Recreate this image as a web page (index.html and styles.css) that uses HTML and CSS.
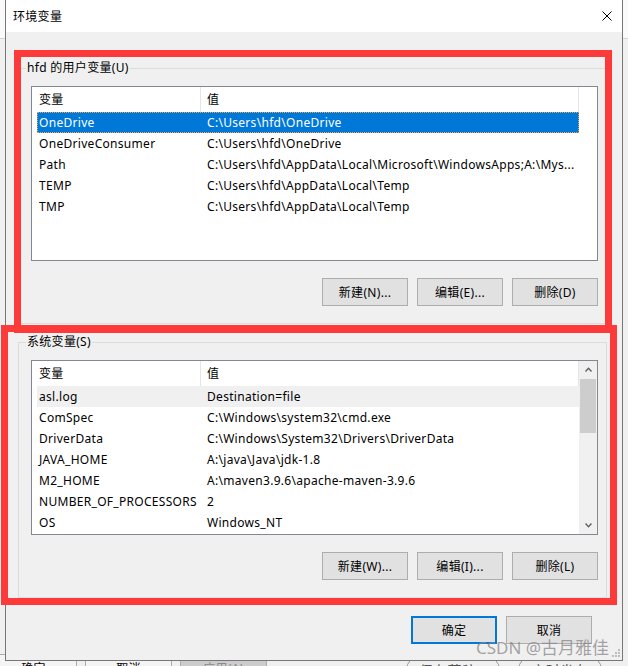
FILE: index.html
```html
<!DOCTYPE html>
<html lang="zh-CN">
<head>
  <meta charset="UTF-8" />
  <title>环境变量</title>
  <link rel="stylesheet" href="styles.css">
</head>
<body>
  <div class="desktop">

    <div class="behind-top"></div>
    <div class="behind-buttons">
      <span class="old-btn">确定</span>
      <span class="old-btn">取消</span>
      <span class="old-btn old-btn-off">应用(A)</span>
    </div>
    <div class="behind-pills">
      <span class="pill">保存草稿 ▾</span>
      <span class="pill">定时发布</span>
    </div>

    <div class="dialog">
      <div class="titlebar">
        <span class="title">环境变量</span>
        <svg class="close" width="10" height="10" viewBox="0 0 10 10">
          <path d="M0.5 0.5 L9.5 9.5 M9.5 0.5 L0.5 9.5" stroke="#000" stroke-width="1" fill="none" />
        </svg>
      </div>

      <fieldset class="group">
        <legend>hfd 的用户变量(U)</legend>
        <div class="list">
          <div class="list-main">
            <div class="list-head">
              <span class="c-name">变量</span>
              <span class="c-value">值</span>
            </div>
            <div class="rows">
              <div class="row selected"><span class="c-name">OneDrive</span><span class="c-value">C:\Users\hfd\OneDrive</span></div>
              <div class="row"><span class="c-name">OneDriveConsumer</span><span class="c-value">C:\Users\hfd\OneDrive</span></div>
              <div class="row"><span class="c-name">Path</span><span class="c-value">C:\Users\hfd\AppData\Local\Microsoft\WindowsApps;A:\Mys...</span></div>
              <div class="row"><span class="c-name">TEMP</span><span class="c-value">C:\Users\hfd\AppData\Local\Temp</span></div>
              <div class="row"><span class="c-name">TMP</span><span class="c-value">C:\Users\hfd\AppData\Local\Temp</span></div>
            </div>
          </div>
        </div>
        <div class="actions">
          <button class="btn">新建(N)...</button>
          <button class="btn">编辑(E)...</button>
          <button class="btn">删除(D)</button>
        </div>
      </fieldset>

      <fieldset class="group">
        <legend>系统变量(S)</legend>
        <div class="list">
          <div class="list-main">
            <div class="list-head">
              <span class="c-name">变量</span>
              <span class="c-value">值</span>
            </div>
            <div class="rows">
              <div class="row current"><span class="c-name">asl.log</span><span class="c-value">Destination=file</span></div>
              <div class="row"><span class="c-name">ComSpec</span><span class="c-value">C:\Windows\system32\cmd.exe</span></div>
              <div class="row"><span class="c-name">DriverData</span><span class="c-value">C:\Windows\System32\Drivers\DriverData</span></div>
              <div class="row"><span class="c-name">JAVA_HOME</span><span class="c-value">A:\java\Java\jdk-1.8</span></div>
              <div class="row"><span class="c-name">M2_HOME</span><span class="c-value">A:\maven3.9.6\apache-maven-3.9.6</span></div>
              <div class="row"><span class="c-name">NUMBER_OF_PROCESSORS</span><span class="c-value">2</span></div>
              <div class="row"><span class="c-name">OS</span><span class="c-value">Windows_NT</span></div>
            </div>
          </div>
          <div class="scrollbar">
            <div class="arrow">
              <svg width="7" height="5" viewBox="0 0 7 5"><path d="M0.5 4.5 L3.5 1.2 L6.5 4.5" stroke="#606060" stroke-width="1.4" fill="none" /></svg>
            </div>
            <div class="thumb"></div>
            <div class="arrow arrow-down">
              <svg width="7" height="5" viewBox="0 0 7 5"><path d="M0.5 0.5 L3.5 3.8 L6.5 0.5" stroke="#606060" stroke-width="1.4" fill="none" /></svg>
            </div>
          </div>
        </div>
        <div class="actions">
          <button class="btn">新建(W)...</button>
          <button class="btn">编辑(I)...</button>
          <button class="btn">删除(L)</button>
        </div>
      </fieldset>

      <div class="footer">
        <button class="btn primary">确定</button>
        <button class="btn">取消</button>
      </div>
    </div>

    <!-- annotation boxes drawn over the dialog -->
    <div class="mark mark-user"></div>
    <div class="mark mark-system"></div>

    <div class="watermark">CSDN @古月雅佳</div>
    <svg class="grip" width="9" height="9" viewBox="0 0 9 9">
      <rect x="7" y="1" width="2" height="2" fill="#bdbdbd" />
      <rect x="4" y="4" width="2" height="2" fill="#bdbdbd" />
      <rect x="7" y="4" width="2" height="2" fill="#bdbdbd" />
      <rect x="1" y="7" width="2" height="2" fill="#bdbdbd" />
      <rect x="4" y="7" width="2" height="2" fill="#bdbdbd" />
      <rect x="7" y="7" width="2" height="2" fill="#bdbdbd" />
    </svg>

  </div>
</body>
</html>
```

FILE: styles.css
```css
* {
  box-sizing: border-box;
}

html, body {
  margin: 0;
}

body {
  font-family: "Noto Sans", "Noto Sans CJK SC", sans-serif;
  font-size: 12px;
  letter-spacing: 0.3px;
  color: #000;
  background: #f0f0f0;
}

.desktop {
  position: relative;
  width: 628px;
  height: 666px;
  overflow: hidden;
}

/* window behind the dialog */
.behind-top {
  height: 39px;
  background: #fafafa;
  border-bottom: 1px solid #d4d4d4;
}

.behind-buttons {
  position: absolute;
  left: -10px;
  top: 654px;
  display: flex;
  gap: 8px;
}

.old-btn {
  width: 87px;
  height: 28px;
  line-height: 28px;
  text-align: center;
  border: 1px solid #adadad;
  background: #f4f4f4;
}

.old-btn-off {
  background: #cccccc;
  color: #8a8a8a;
}

.behind-pills {
  position: absolute;
  left: 406px;
  top: 655px;
  display: flex;
  gap: 18px;
}

.pill {
  height: 30px;
  line-height: 30px;
  padding: 0 12px;
  border: 1px solid #9a9a9a;
  border-radius: 15px;
  font-size: 14px;
  color: #555;
  white-space: nowrap;
}

/* dialog */
.dialog {
  position: absolute;
  left: 5px;
  top: -1px;
  width: 618px;
  height: 662px;
  border: 1px solid #777;
  background: #f0f0f0;
}

.titlebar {
  height: 32px;
  background: #fff;
  display: flex;
  align-items: center;
  justify-content: space-between;
  padding: 0 10px 0 7px;
}

.close {
  display: block;
}

.group {
  width: 589px;
  margin: 28px 0 0 12px;
  padding: 10px 8px 17px 12px;
  border: 1px solid #dcdcdc;
  min-width: 0;
}

.group + .group {
  margin-top: 10px;
}

.group legend {
  margin-left: -5px;
  padding: 0 1px;
  line-height: 16px;
}

.list {
  height: 175px;
  display: flex;
  background: #fff;
  border: 1px solid #828790;
}

.list-main {
  width: 547px;
}

.list-head {
  display: flex;
  height: 25px;
  line-height: 25px;
}

.list-head span {
  border-right: 1px solid #e5e5e5;
}

.list-head .c-name {
  width: 169px;
  padding-left: 7px;
}

.list-head .c-value {
  width: 378px;
  padding-left: 6px;
}

.rows {
  margin-left: 5px;
}

.row {
  display: flex;
  height: 21px;
  line-height: 21px;
  white-space: nowrap;
}

.row .c-name {
  width: 164px;
  padding-left: 2px;
}

.row .c-value {
  flex: 1;
  padding-left: 6px;
}

.row.selected {
  background: #0078d7;
  color: #fff;
  outline: 1px dotted #f2a548;
  outline-offset: -1px;
}

.row.current {
  background: #f0f0f0;
}

.scrollbar {
  width: 18px;
  background: #f0f0f0;
  display: flex;
  flex-direction: column;
  padding: 0 1px;
}

.arrow {
  height: 17px;
  display: flex;
  align-items: center;
  justify-content: center;
}

.arrow-down {
  margin-top: auto;
}

.thumb {
  height: 54px;
  margin-top: 1px;
  background: #cdcdcd;
}

.actions {
  display: flex;
  justify-content: flex-end;
  gap: 9px;
  margin-top: 17px;
}

.btn {
  width: 86px;
  height: 28px;
  padding: 0;
  font: inherit;
  letter-spacing: inherit;
  color: #000;
  background: #e1e1e1;
  border: 1px solid #adadad;
}

.btn.primary {
  border: 2px solid #0078d7;
}

.footer {
  display: flex;
  justify-content: flex-end;
  gap: 9px;
  margin-top: 18px;
  padding-right: 30px;
}

/* red annotation boxes */
.mark {
  position: absolute;
  border: 7px solid #fd3a3a;
}

.mark-user {
  left: 14px;
  top: 50px;
  width: 598px;
  height: 283px;
}

.mark-system {
  left: 1px;
  top: 325px;
  width: 616px;
  height: 280px;
}

.watermark {
  position: absolute;
  left: 476px;
  top: 637px;
  font-size: 17px;
  line-height: 22px;
  letter-spacing: 0;
  color: rgba(135, 135, 135, 0.75);
  white-space: nowrap;
}

.grip {
  position: absolute;
  left: 611px;
  top: 648px;
}
```
